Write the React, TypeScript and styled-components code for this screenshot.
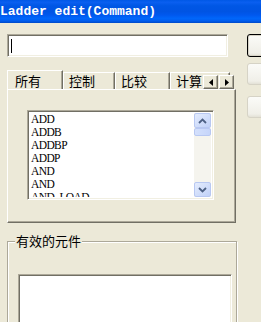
import styled, { createGlobalStyle } from "styled-components"

const GlobalStyle = createGlobalStyle`
  html, body {
    margin: 0;
    padding: 0;
    background: #ece9d8;
  }
`

const commands = ["ADD", "ADDB", "ADDBP", "ADDP", "AND", "AND", "AND LOAD"]
const tabs = ["所有", "控制", "比较", "计算"]

export default function App() {
  return (
    <>
      <GlobalStyle />
      <Window>
        <TitleBar>
          <TitleText>Ladder edit(Command)</TitleText>
        </TitleBar>
        <Body>
          <LeftColumn>
            <CommandInput>
              <Caret />
            </CommandInput>

            <TabControl>
              <TabStrip>
                {tabs.map((label, i) => (
                  <Tab key={label} $active={i === 0} $width={[56, 52, 55, 60][i]}>
                    {label}
                  </Tab>
                ))}
                <TabScroller>
                  <ArrowButton>
                    <svg width="4" height="7" viewBox="0 0 4 7">
                      <path d="M4 0 L0 3.5 L4 7 Z" fill="#000" />
                    </svg>
                  </ArrowButton>
                  <ArrowButton>
                    <svg width="4" height="7" viewBox="0 0 4 7">
                      <path d="M0 0 L4 3.5 L0 7 Z" fill="#000" />
                    </svg>
                  </ArrowButton>
                </TabScroller>
              </TabStrip>
              <TabPanel>
                <ListBox>
                  <ListItems>
                    {commands.map((c, i) => (
                      <ListItem key={i}>{c}</ListItem>
                    ))}
                  </ListItems>
                  <ScrollBar>
                    <ScrollButton>
                      <svg width="9" height="6" viewBox="0 0 9 6">
                        <path d="M1 5 L4.5 1.5 L8 5" stroke="#4d6185" strokeWidth="1.8" fill="none" />
                      </svg>
                    </ScrollButton>
                    <ScrollThumb />
                    <ScrollTrack />
                    <ScrollButton>
                      <svg width="9" height="6" viewBox="0 0 9 6">
                        <path d="M1 1 L4.5 4.5 L8 1" stroke="#4d6185" strokeWidth="1.8" fill="none" />
                      </svg>
                    </ScrollButton>
                  </ScrollBar>
                </ListBox>
              </TabPanel>
            </TabControl>

            <GroupBox>
              <GroupLabel>有效的元件</GroupLabel>
              <ElementList />
            </GroupBox>
          </LeftColumn>

          <RightColumn>
            <DialogButton $default />
            <DialogButton />
            <DialogButton />
          </RightColumn>
        </Body>
      </Window>
    </>
  )
}

const Window = styled.div`
  width: 261px;
  height: 322px;
  overflow: hidden;
  background: #ece9d8;
  font-family: "Noto Sans CJK SC", "Liberation Sans", sans-serif;
`

const TitleBar = styled.div`
  height: 23px;
  display: flex;
  align-items: center;
  background: linear-gradient(
    to bottom,
    #0058e6 0%,
    #0a5ff0 10%,
    #0057e5 25%,
    #0054e3 50%,
    #0058ee 65%,
    #0066fa 80%,
    #005ef0 90%,
    #0049c8 100%
  );
`

const TitleText = styled.span`
  font-family: "Liberation Mono", monospace;
  font-weight: bold;
  font-size: 13px;
  color: #fff;
  margin-top: -1px;
`

const Body = styled.div`
  display: flex;
  gap: 10px;
  padding: 11px 0 0 7px;
`

const LeftColumn = styled.div`
  width: 230px;
  flex-shrink: 0;
  display: flex;
  flex-direction: column;
`

const sunken = `
  border-top: 1px solid #aca899;
  border-left: 1px solid #aca899;
  border-right: 1px solid #fff;
  border-bottom: 1px solid #fff;
  box-shadow: inset 1px 1px #716f64, inset -1px -1px #f1efe2;
`

const CommandInput = styled.div`
  box-sizing: border-box;
  width: 221px;
  height: 23px;
  background: #fff;
  ${sunken}
  display: flex;
  align-items: center;
  padding-left: 3px;
`

const Caret = styled.span`
  width: 1px;
  height: 14px;
  background: #000;
`

const TabControl = styled.div`
  margin-top: 13px;
  width: 229px;
  display: flex;
  flex-direction: column;
`

const TabStrip = styled.div`
  position: relative;
  height: 19px;
  display: flex;
  align-items: flex-end;
  overflow: hidden;
  z-index: 1;
`

const Tab = styled.div<{ $active?: boolean; $width: number }>`
  box-sizing: border-box;
  flex-shrink: 0;
  width: ${(p) => p.$width}px;
  height: ${(p) => (p.$active ? 20 : 17)}px;
  margin-bottom: ${(p) => (p.$active ? -1 : 0)}px;
  padding: ${(p) => (p.$active ? "3px 0 0 7px" : "1px 0 0 5px")};
  background: #ece9d8;
  border-top: 1px solid #fff;
  border-left: 1px solid #fff;
  border-right: 1px solid #716f64;
  box-shadow: inset -1px 0 #aca899;
  font-size: 13px;
  line-height: 14px;
  color: #000;
  white-space: nowrap;
`

const TabScroller = styled.div`
  position: absolute;
  right: 2px;
  top: 5px;
  display: flex;
  gap: 1px;
`

const raised = `
  border-top: 1px solid #fff;
  border-left: 1px solid #fff;
  border-right: 1px solid #716f64;
  border-bottom: 1px solid #716f64;
  box-shadow: inset -1px -1px #aca899;
`

const ArrowButton = styled.div`
  box-sizing: border-box;
  width: 15px;
  height: 14px;
  background: #ece9d8;
  ${raised}
  display: flex;
  align-items: center;
  justify-content: center;
`

const TabPanel = styled.div`
  box-sizing: border-box;
  height: 134px;
  padding: 20px 0 0 19px;
  ${raised}
`

const ListBox = styled.div`
  box-sizing: border-box;
  width: 187px;
  height: 90px;
  background: #fff;
  ${sunken}
  display: flex;
  padding: 2px;
`

const ListItems = styled.div`
  flex: 1;
  overflow: hidden;
  padding: 0 0 0 1px;
`

const ListItem = styled.div`
  font-family: "Liberation Serif", serif;
  font-size: 11.5px;
  line-height: 13px;
  letter-spacing: -0.6px;
  word-spacing: 3px;
  color: #000;
  white-space: nowrap;
`

const ScrollBar = styled.div`
  width: 17px;
  display: flex;
  flex-direction: column;
  background: #f5f4ee;
`

const ScrollButton = styled.div`
  box-sizing: border-box;
  height: 15px;
  border: 1px solid #b8c8f2;
  border-radius: 2px;
  background: linear-gradient(to bottom right, #e4ecfd, #c0d1f8);
  display: flex;
  align-items: center;
  justify-content: center;
`

const ScrollThumb = styled.div`
  box-sizing: border-box;
  height: 8px;
  border: 1px solid #b8c8f2;
  border-radius: 2px;
  background: linear-gradient(to right, #d4e0fc, #c6d5fa);
`

const ScrollTrack = styled.div`
  flex: 1;
`

const GroupBox = styled.div`
  position: relative;
  margin-top: 18px;
  box-sizing: border-box;
  width: 230px;
  height: 90px;
  border: 1px solid #aca899;
  box-shadow: inset 1px 1px #fff, 1px 1px #fff;
  padding: 32px 0 0 10px;
`

const GroupLabel = styled.span`
  position: absolute;
  left: 7px;
  top: -8px;
  padding: 0 1px;
  background: #ece9d8;
  font-size: 13px;
  line-height: 14px;
  color: #000;
`

const ElementList = styled.div`
  box-sizing: border-box;
  width: 214px;
  height: 60px;
  background: #fff;
  ${sunken}
`

const RightColumn = styled.div`
  display: flex;
  flex-direction: column;
  gap: 6px;
`

const DialogButton = styled.div<{ $default?: boolean }>`
  box-sizing: border-box;
  flex-shrink: 0;
  width: 75px;
  height: ${(p) => (p.$default ? 23 : 22)}px;
  margin-bottom: ${(p) => (p.$default ? 0 : 5)}px;
  border-radius: 3px;
  background: linear-gradient(to bottom, #fbfbf8, #f0efe8 85%, #e3e1d6);
  border: 1px solid ${(p) => (p.$default ? "#000" : "#d6d3c6")};
  box-shadow: ${(p) => (p.$default ? "inset 0 0 0 1px #d6d3c6" : "none")};
`
